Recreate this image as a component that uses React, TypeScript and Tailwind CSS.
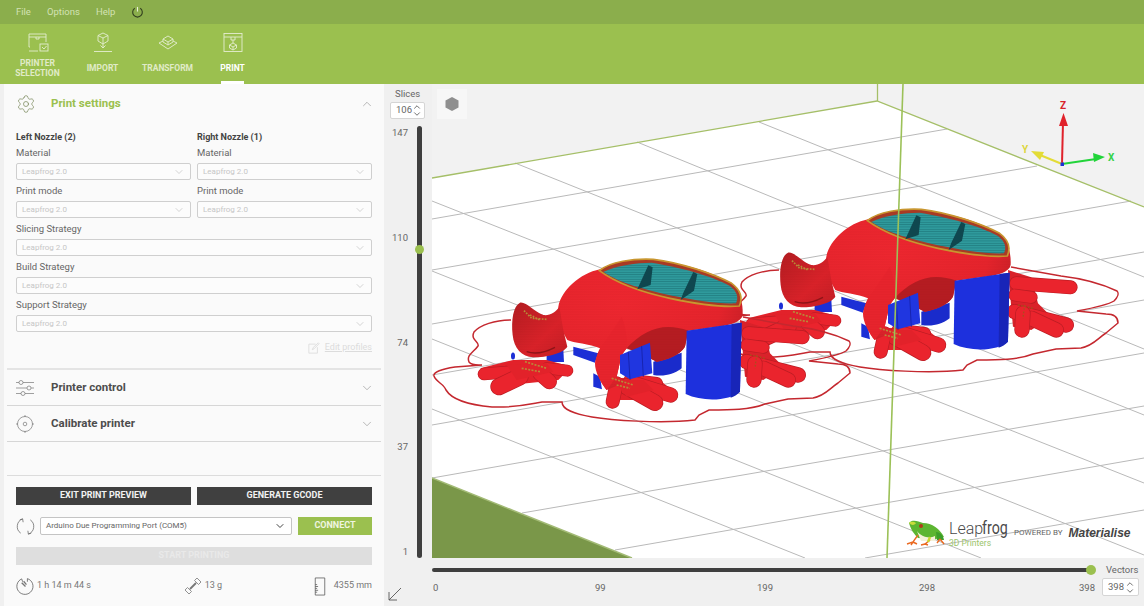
import React from 'react';
import { Settings, ChevronUp, ChevronDown } from 'lucide-react';

const GRID: number[][] = [
  [759, 122, 1144, 277],
  [637, 142, 1144, 349],
  [515, 163, 1144, 415],
  [432, 201, 1144, 483],
  [432, 271, 1144, 555],
  [432, 339, 981, 558],
  [432, 409, 805, 558],
  [432, 219, 947, 129],
  [432, 270, 1037, 166],
  [432, 324, 1131, 201],
  [432, 375, 1144, 252],
  [432, 425, 1144, 300],
  [432, 478, 1144, 353],
  [522, 513, 1144, 406],
  [615, 550, 1144, 458],
  [865, 558, 1144, 510],
];

const RAFT =
  'M511,320 C495,320 480,325 474,332 C470,340 480,342 478,346 C474,352 466,355 469,362 C472,366 480,365 482,365 L455,367 C442,369 433,372 434,376 C436,382 444,384 446,390 C452,400 470,405 492,407 C515,408 530,404 542,402 L562,402 C562,410 575,414 592,417 C610,420 660,424 695,420 L699,415 L709,410 C730,410 750,410 765,404 L788,399 L813,398 C825,396 830,388 838,383 L850,373 C850,366 845,364 838,364 L809,361 C825,358 840,355 846,351 C850,347 851,343 849,341 C830,332 810,328 793,326 L743,317';

const BODY =
  'M385,200 C395,150 450,100 510,88 C560,60 620,55 670,60 C750,68 850,95 900,130 C930,150 940,190 938,225 C935,245 900,258 850,262 L775,272 L765,320 C750,345 710,360 680,365 C650,350 620,335 590,325 L575,345 L560,410 L590,425 L530,450 C505,420 485,370 510,325 C480,310 430,310 412,300 C395,270 380,240 385,200 Z';

const HEAD =
  'M270,188 C290,185 310,215 340,225 C360,228 378,215 388,200 L400,270 L412,320 C400,340 350,352 310,352 C275,350 252,325 248,285 C243,240 250,198 270,188 Z';

// toes are just thick round lines: x1, y1, x2, y2, width
const TOES: number[][] = [
  [955, 280, 1118, 292, 42],
  [950, 315, 1000, 322, 38],
  [950, 365, 1105, 405, 46],
  [1000, 385, 1075, 420, 46],
  [975, 370, 972, 420, 46],
  [250, 395, 162, 402, 38],
  [270, 410, 207, 440, 52],
  [350, 385, 412, 392, 36],
  [330, 400, 358, 425, 46],
  [600, 420, 680, 430, 38],
  [610, 430, 722, 465, 46],
  [590, 440, 675, 488, 50],
  [560, 430, 548, 485, 42],
];

const Frog = () => (
  <g transform="translate(430 240) scale(0.3333)">
    {/* supports behind the body */}
    <path d="M350,342 L400,328 L402,366 L350,366 Z" fill="#1c2fd6" />
    <path d="M430,320 L505,340 L495,368 L430,345 Z" fill="#1c2fd6" />
    <path d="M670,365 L755,338 L755,385 C730,405 700,410 670,405 Z" fill="#1a2bcb" />
    <path d="M490,400 L510,410 L516,448 L490,440 Z" fill="#1c2fd6" />

    {/* rear and front feet */}
    <path d="M930,240 L1000,262 L1020,340 L1060,380 L1000,420 L945,410 Z" fill="#d9222a" />
    <path d="M150,385 L250,360 L350,360 L425,380 L385,420 L240,435 Z" fill="#e2222a" />
    <path d="M530,415 L680,412 L725,450 L690,480 L600,480 L560,480 Z" fill="#e2222a" />
    {TOES.map((t, i) => (
      <g key={i}>
        <line x1={t[0]} y1={t[1]} x2={t[2]} y2={t[3]} stroke="#bb1d24" strokeWidth={t[4]} strokeLinecap="round" />
        <line x1={t[0]} y1={t[1]} x2={t[2]} y2={t[3]} stroke="#ea242d" strokeWidth={t[4] - 4} strokeLinecap="round" />
      </g>
    ))}
    <path d="M230,375 L350,370 L370,395 L260,420 Z" fill="#e2222a" />
    <path d="M550,420 L640,420 L670,450 L590,470 Z" fill="#e2222a" />

    {/* body */}
    <path d={BODY} fill="url(#redBody)" />
    <path d="M495,370 C500,330 540,290 575,230 C590,270 590,300 590,325 L575,345 L560,410 L530,450 C510,425 495,395 495,370 Z" fill="#e8242d" />
    <path d="M590,325 C640,270 700,245 775,272 L765,320 C750,345 710,360 680,365 C650,350 620,335 590,325 Z" fill="#b51c22" />
    <path d={BODY} fill="url(#layers)" />

    {/* block in front of the belly */}
    <path d="M570,345 L660,308 L667,400 L600,418 L570,400 Z" fill="#2036e0" />
    <path d="M595,335 L600,418 M635,318 L640,410" stroke="#1724b0" strokeWidth="3" fill="none" />

    {/* head */}
    <path d={HEAD} fill="url(#redHead)" />
    <path d={HEAD} fill="url(#layers)" />
    <path d="M290,335 C320,345 350,335 375,322" stroke="#8e1418" strokeWidth="4" fill="none" />
    <path d="M282,212 L305,235 L350,238 M300,225 L330,240" stroke="#b98a38" strokeWidth="5" strokeDasharray="5 4" fill="none" />
    <path d="M285,365 L350,385 M275,385 L330,395 M545,415 L610,435 M560,435 L600,445" stroke="#b98a38" strokeWidth="5" strokeDasharray="6 4" fill="none" />
    <path d="M960,345 L1005,355 M980,345 L975,385" stroke="#a8501f" strokeWidth="4" strokeDasharray="5 5" fill="none" />

    {/* big support in front */}
    <path d="M770,272 L935,248 L930,455 C900,482 820,487 767,462 Z" fill="#1d30dd" />
    <path d="M905,252 L935,248 L930,455 C922,464 912,470 902,473 Z" fill="#1825b8" />

    {/* sliced top */}
    <path d="M508,92 C540,65 610,55 670,58 C750,68 850,100 905,130 C932,150 938,175 928,198 C880,202 800,192 720,175 C640,158 560,130 508,92 Z" fill="#a83a25" stroke="#c8962f" strokeWidth="5" />
    <path d="M520,96 C560,76 620,68 665,68 C740,80 840,105 900,138 C922,155 926,172 918,190 C860,192 790,180 720,166 C650,150 570,130 520,96 Z" fill="url(#infill)" />
    <path d="M655,76 L668,82 L662,135 L622,148 Z" fill="#0f474f" />
    <path d="M790,96 L802,102 L792,152 L752,180 L760,158 Z" fill="#0f474f" />
  </g>
);

const Viewport = () => (
  <svg viewBox="432 84 712 474" className="block w-full h-full">
    <defs>
      <radialGradient id="redBody" cx="0.35" cy="0.35" r="0.75">
        <stop offset="0" stopColor="#ee2730" />
        <stop offset="0.7" stopColor="#e6242c" />
        <stop offset="1" stopColor="#c01e25" />
      </radialGradient>
      <linearGradient id="redHead" x1="0" y1="0" x2="1" y2="1">
        <stop offset="0" stopColor="#b21c21" />
        <stop offset="0.6" stopColor="#d92229" />
        <stop offset="1" stopColor="#c21e25" />
      </linearGradient>
      <pattern id="infill" width="20" height="7" patternUnits="userSpaceOnUse">
        <rect width="20" height="7" fill="#2f9a9c" />
        <rect y="5" width="20" height="2" fill="#1f7a7f" />
      </pattern>
      <pattern id="layers" width="6" height="5" patternUnits="userSpaceOnUse">
        <rect y="3" width="6" height="2" fill="#7a0f14" fillOpacity="0.07" />
      </pattern>
    </defs>

    <rect x="432" y="84" width="712" height="474" fill="#f2f2f2" />
    <polygon points="432,178 877,101 1144,207 1144,558 432,558" fill="#ffffff" />
    {GRID.map((l, i) => (
      <line key={i} x1={l[0]} y1={l[1]} x2={l[2]} y2={l[3]} stroke="#b9b9b9" strokeWidth="1" />
    ))}
    <polygon points="432,478 632,558 432,558" fill="#7a9749" />
    <line x1="432" y1="478" x2="632" y2="558" stroke="#a3bb76" strokeWidth="1.5" />
    <polyline points="432,178 877,101 1144,207" fill="none" stroke="#a5bf68" strokeWidth="1.3" />
    <line x1="877.5" y1="84" x2="877.5" y2="101" stroke="#a5bf68" strokeWidth="1.3" />

    <g transform="translate(268 -50)">
      <path d={RAFT} fill="none" stroke="#c4282f" strokeWidth="1.5" />
      <Frog />
    </g>
    <path d={RAFT} fill="none" stroke="#c4282f" strokeWidth="1.5" />
    <Frog />
    <ellipse cx="513" cy="356" rx="2" ry="3.5" fill="#1c2fd6" />
    <ellipse cx="781" cy="306" rx="2" ry="3.5" fill="#1c2fd6" />

    <line x1="903" y1="84" x2="887" y2="558" stroke="#9cc158" strokeWidth="1.6" />

    {/* axes */}
    <line x1="1062" y1="164" x2="1063" y2="122" stroke="#e0222b" strokeWidth="2" />
    <polygon points="1063.5,113 1059,126 1068,126" fill="#e0222b" />
    <line x1="1062" y1="164" x2="1096" y2="159" stroke="#22d43a" strokeWidth="2" />
    <polygon points="1105,157 1093,153 1094,162" fill="#22d43a" />
    <line x1="1062" y1="164" x2="1040" y2="155" stroke="#e3dc36" strokeWidth="2" />
    <polygon points="1031,151 1044,152 1040,160" fill="#e3dc36" />
    <rect x="1060.5" y="162.5" width="3.5" height="3.5" fill="#1c2fd6" />
  </svg>
);

const LogoFrog = () => (
  <svg viewBox="0 0 40 26" className="w-10 h-[26px] shrink-0">
    <path d="M3,3 C6,-1 12,1 17,3 C26,3 34,9 38,17 L30,19 L12,18 C8,14 5,10 3,3 Z" fill="#5cb531" />
    <path d="M11,11 C15,17 24,19 29,16 L29,21 L15,21 Z" fill="#f4f1d8" />
    <path d="M3,3 C5,1 8,2 10,3 C9,5 6,6 3,3 Z" fill="#c8dc3c" />
    <circle cx="15" cy="6" r="2" fill="#b03a1a" />
    <path d="M30,12 C34,12 37,15 38,20 L31,20 Z" fill="#3d9e2a" />
    <path d="M12,15 L7,22 L1,24 M7,22 L5,25 M7,22 L11,24 M24,20 L19,24 L15,25 M19,24 L22,25 M34,19 L38,24 M34,19 L31,23" stroke="#ea6a22" strokeWidth="1.4" fill="none" />
    <path d="M24,17 L22,22" stroke="#c8d62e" strokeWidth="2.4" />
  </svg>
);

const NavIcon = ({ kind }: { kind: string }) => (
  <svg viewBox="0 0 22 22" className="w-[22px] h-[22px]" fill="none" stroke="#e4edd0" strokeWidth="0.9">
    {kind === 'printer' && (
      <>
        <path d="M3,15 L2,15 L2,2 L19,2 L19,10 M2,5 L19,5 M9,5 L9,7 L12,7 L12,5 M2,19 L11,19" />
        <rect x="13" y="12" width="8" height="7" />
        <path d="M15,15 L17,17 L19.5,14" />
      </>
    )}
    {kind === 'import' && (
      <>
        <path d="M11,1 L16,3.5 L16,9 L11,12 L6,9 L6,3.5 Z M6,3.5 L11,6 L16,3.5 M11,6 L11,16 M8.5,13.5 L11,16 L13.5,13.5 M2,19.5 L20,19.5" />
      </>
    )}
    {kind === 'transform' && (
      <>
        <path d="M11,4 L16,7 L11,10 L6,7 Z M6,7 L6,10 L11,13 L16,10 L16,7 M11,10 L11,13 M6,9 L2,11 L11,17 L20,11 L16,9" />
      </>
    )}
    {kind === 'print' && (
      <>
        <rect x="2" y="1.5" width="18" height="18" />
        <path d="M2,5 L20,5 M9,5 L9,8 L13,8 L13,5 M11,8 L11,11" />
        <path d="M11,11 L14.5,13 L14.5,16 L11,18 L7.5,16 L7.5,13 Z M7.5,13 L11,15 L14.5,13 M11,15 L11,18" />
      </>
    )}
  </svg>
);

const NavItem = ({ kind, label, active }: { kind: string; label: string[]; active?: boolean }) => (
  <div className="relative flex flex-col items-center h-[60px] w-[65px] pt-2">
    <NavIcon kind={kind} />
    <div className={`flex-1 flex flex-col justify-center pb-[2px] text-center text-[8.5px] font-bold leading-[10px] ${active ? 'text-white' : 'text-[#e0ebc8]'}`}>
      {label.map((l) => (
        <div key={l}>{l}</div>
      ))}
    </div>
    {active && <div className="absolute bottom-0 w-[23px] h-[3px] bg-white" />}
  </div>
);

const Field = ({ label }: { label: string }) => (
  <div>
    <div className="flex items-center h-[21px] pt-[2px] text-[9.5px] text-[#666]">{label}</div>
    <div className="flex items-center justify-between h-[17px] px-[5px] border border-[#cfcfcf] rounded-[2px] bg-[#fcfcfc] text-[8px] text-[#c6c6c6]">
      <span>Leapfrog 2.0</span>
      <ChevronDown size={12} strokeWidth={1} className="text-[#aaa]" />
    </div>
  </div>
);

const AccordionRow = ({ icon, label }: { icon: React.ReactNode; label: string }) => (
  <div className="flex items-center h-9 mx-[3px] pl-[9px] pr-[7px] border-b border-[#d6d6d6]">
    <div className="w-[35px]">{icon}</div>
    <span className="flex-1 text-[11.5px] font-bold text-[#4d4d4d]">{label}</span>
    <ChevronDown size={14} strokeWidth={1} className="text-[#888]" />
  </div>
);

const Spinner = ({ value, className }: { value: string; className: string }) => (
  <div className={`flex items-center justify-between pl-[5px] pr-[3px] bg-white border border-[#d5d5d5] rounded-[2px] text-[9.5px] text-[#666] ${className}`}>
    <span>{value}</span>
    <div className="flex flex-col -space-y-[3px]">
      <ChevronUp size={10} strokeWidth={2} className="text-[#555]" />
      <ChevronDown size={10} strokeWidth={2} className="text-[#555]" />
    </div>
  </div>
);

export default function App() {
  return (
    <div className="w-[1144px] h-[606px] overflow-hidden flex flex-col bg-[#f0f0f0] font-['Roboto',sans-serif]">
      {/* Menu bar */}
      <div className="h-6 flex items-center bg-[#8bae4c] pl-4 text-[9.5px] text-[#d3e2b4]">
        <span className="w-[31px]">File</span>
        <span className="w-[49px]">Options</span>
        <span className="w-[35px]">Help</span>
        <svg viewBox="0 0 14 14" className="w-[13px] h-[13px]" fill="none" stroke="#33401f" strokeWidth="1.2">
          <path d="M4,2.5 A5.2,5.2 0 1 0 10,2.5" />
          <path d="M7,1 L7,6" stroke="#e7efd6" />
        </svg>
      </div>

      {/* Toolbar */}
      <div className="h-[60px] flex items-start bg-[#9bc04f] pl-[5px]">
        <NavItem kind="printer" label={['PRINTER', 'SELECTION']} />
        <NavItem kind="import" label={['IMPORT']} />
        <NavItem kind="transform" label={['TRANSFORM']} />
        <NavItem kind="print" label={['PRINT']} active />
      </div>

      <div className="flex-1 flex min-h-0">
        {/* Left panel */}
        <div className="ml-1 w-[380px] flex flex-col bg-[#fafafa]">
          <div className="flex items-center h-[39px] pl-3 pr-[10px]">
            <div className="w-[35px]">
              <Settings size={20} strokeWidth={0.9} className="text-[#7c8a5e]" />
            </div>
            <span className="flex-1 text-[11.5px] font-bold text-[#9bc04f]">Print settings</span>
            <ChevronUp size={14} strokeWidth={1} className="text-[#888]" />
          </div>

          <div className="px-3 pt-2">
            <div className="grid grid-cols-2 gap-x-[6px] text-[9px] font-bold leading-3 text-[#444] -mb-[1px]">
              <span>Left Nozzle (2)</span>
              <span>Right Nozzle (1)</span>
            </div>
            <div className="grid grid-cols-2 gap-x-[6px]">
              <Field label="Material" />
              <Field label="Material" />
              <Field label="Print mode" />
              <Field label="Print mode" />
            </div>
            <Field label="Slicing Strategy" />
            <Field label="Build Strategy" />
            <Field label="Support Strategy" />
            <div className="flex items-center justify-end gap-[5px] h-9 pb-1 text-[9px] underline text-[#dcdcdc]">
              <svg viewBox="0 0 14 14" className="w-3 h-3" fill="none" stroke="#dcdcdc" strokeWidth="1">
                <path d="M9,2.5 L1,2.5 L1,13 L11,13 L11,6 M5,9 L6,6.5 L12,1 L13,2 L7,8 Z" />
              </svg>
              Edit profiles
            </div>
          </div>

          <div className="mx-[3px] border-t-2 border-[#e4e4e4]" />
          <AccordionRow
            label="Printer control"
            icon={
              <svg viewBox="0 0 18 16" className="w-[18px] h-4" fill="none" stroke="#777" strokeWidth="0.7">
                <path d="M0,2.5 L3,2.5 M7,2.5 L18,2.5 M0,8 L11,8 M15,8 L18,8 M0,13.5 L5,13.5 M9,13.5 L18,13.5" />
                <circle cx="5" cy="2.5" r="2" />
                <circle cx="13" cy="8" r="2" />
                <circle cx="7" cy="13.5" r="2" />
              </svg>
            }
          />
          <AccordionRow
            label="Calibrate printer"
            icon={
              <svg viewBox="0 0 18 18" className="w-[18px] h-[18px]" fill="none" stroke="#777" strokeWidth="0.7">
                <circle cx="9" cy="9" r="7.5" />
                <circle cx="9" cy="9" r="1.8" />
                <path d="M9,0 L9,2 M9,16 L9,18 M0,9 L2,9 M16,9 L18,9" />
              </svg>
            }
          />

          <div className="mt-auto mx-[3px] border-t border-[#dcdcdc]" />
          <div className="px-3 pt-[11px] h-[130px] flex flex-col">
            <div className="grid grid-cols-2 gap-x-[6px]">
              <button className="h-[18px] bg-[#404040] text-[9px] font-bold text-[#f2f2f2]">EXIT PRINT PREVIEW</button>
              <button className="h-[18px] bg-[#404040] text-[9px] font-bold text-[#f2f2f2]">GENERATE GCODE</button>
            </div>
            <div className="flex items-center mt-3 h-[18px]">
              <svg viewBox="0 0 20 20" className="w-[19px] h-[19px] shrink-0" fill="none" stroke="#666" strokeWidth="0.8">
                <path d="M7,2 A8.5,8.5 0 0 0 5,17 M13,18 A8.5,8.5 0 0 0 15,3 M4,3 L7,2 L7.5,5.5 M16,17 L13,18 L12.5,14.5" />
              </svg>
              <div className="ml-[5px] w-[252px] h-[18px] flex items-center justify-between px-[5px] border border-[#c4c4c4] rounded-[2px] bg-white text-[8px] text-[#666]">
                <span>Arduino Due Programming Port (COM5)</span>
                <ChevronDown size={12} strokeWidth={2} className="text-[#444]" />
              </div>
              <button className="ml-[6px] flex-1 h-[18px] bg-[#9bc04f] text-[9px] font-bold text-[#eff5e0]">CONNECT</button>
            </div>
            <div className="mt-3 h-[18px] flex items-center justify-center bg-[#dedede] text-[9px] font-bold text-[#e9e9e9]">START PRINTING</div>
            <div className="flex items-center justify-between mt-[11px] text-[9px] text-[#777]">
              <div className="flex items-center gap-[2px]">
                <svg viewBox="0 0 20 20" className="w-[19px] h-[19px]" fill="none" stroke="#555" strokeWidth="0.8">
                  <path d="M6,2 A8.5,8.5 0 1 0 12,1.7 L12,5 M6,2 L7,5" />
                  <path d="M6,6 L10,10 M8,4.5 L11,8" strokeWidth="1.4" stroke="#777" />
                </svg>
                <span>1 h 14 m 44 s</span>
              </div>
              <div className="flex items-center gap-[2px]">
                <svg viewBox="0 0 20 20" className="w-5 h-5" fill="none" stroke="#777" strokeWidth="0.8">
                  <path d="M7,13 L13,7" strokeWidth="1.8" />
                  <path d="M2,14 L6,18 L8.5,15.5 L4.5,11.5 Z M11.5,4.5 L15.5,8.5 L18,6 L14,2 Z" />
                </svg>
                <span>13 g</span>
              </div>
              <div className="flex items-center gap-2">
                <svg viewBox="0 0 12 20" className="w-3 h-[19px]" fill="none" stroke="#555" strokeWidth="0.8">
                  <path d="M11,1 L1,1 L1,19 L11,19 Z M1,10 L4,10 M1,12 L3,12 M1,14 L4,14 M1,16 L3,16 M1,8 L3,8" />
                </svg>
                <span>4355 mm</span>
              </div>
            </div>
          </div>
        </div>

        {/* Slices column + viewport + vectors */}
        <div className="flex-1 flex flex-col min-w-0">
          <div className="flex-1 flex min-h-0">
            <div className="relative w-[48px] bg-[#f0f0f0]">
              <div className="pt-1 pl-[11px] text-[9.5px] text-[#666] leading-3">Slices</div>
              <Spinner value="106" className="ml-[6px] mt-[2px] w-[35px] h-[17px]" />
              <div className="absolute left-[33px] top-[42px] bottom-0 w-[5px] rounded-full bg-[#3f3f3f]" />
              <div className="absolute left-[31px] top-[161px] w-[9px] h-[9px] rounded-full bg-[#9bc04f]" />
              <span className="absolute right-[24px] top-[42px] text-[9.5px] text-[#666]">147</span>
              <span className="absolute right-[24px] top-[147px] text-[9.5px] text-[#666]">110</span>
              <span className="absolute right-[24px] top-[252px] text-[9.5px] text-[#666]">74</span>
              <span className="absolute right-[24px] top-[356px] text-[9.5px] text-[#666]">37</span>
              <span className="absolute right-[24px] top-[461px] text-[9.5px] text-[#666]">1</span>
            </div>
            <div className="relative flex-1 min-w-0">
              <Viewport />
              <div className="absolute left-[5px] top-[5px] w-[30px] h-[30px] bg-[#f7f7f7] flex items-center justify-center">
                <svg viewBox="0 0 16 16" className="w-4 h-4">
                  <polygon points="8,1 14.5,4.5 14.5,11.5 8,15 1.5,11.5 1.5,4.5" fill="#8f8f8f" />
                </svg>
              </div>
              <span className="absolute left-[628px] top-[14px] text-[10px] font-bold text-[#d9232b]">Z</span>
              <span className="absolute left-[676px] top-[66px] text-[10px] font-bold text-[#34d24a]">X</span>
              <span className="absolute left-[590px] top-[58px] text-[10px] font-bold text-[#dcd63a]">Y</span>
              <div className="absolute left-[474px] top-[434px] flex items-center">
                <LogoFrog />
                <div className="relative ml-[3px] w-[59px] h-[30px] text-[#4a4a4a]">
                  <div className="flex items-baseline h-5 leading-5 whitespace-nowrap">
                    <span className="text-[16px] font-light w-[33px]">Leap</span>
                    <span className="inline-block text-[19px] w-[26px] scale-x-75 origin-left">frog</span>
                  </div>
                  <div className="absolute left-0 top-[21px] text-[8.5px] leading-[9px] text-[#9bc46b] whitespace-nowrap">3D Printers</div>
                </div>
                <span className="ml-[6px] text-[8px] text-[#666] whitespace-nowrap">POWERED BY</span>
                <span className="ml-[6px] text-[12px] font-bold italic text-[#444] font-['Liberation_Sans',sans-serif] whitespace-nowrap">Materialise</span>
              </div>
            </div>
          </div>

          <div className="relative h-[48px] bg-[#f0f0f0]">
            <svg viewBox="0 0 14 14" className="absolute left-1 top-[29px] w-[14px] h-[14px]" fill="none" stroke="#555" strokeWidth="0.9">
              <path d="M13,1 L1,13 M1,5 L1,13 L9,13" />
            </svg>
            <div className="absolute left-[48px] top-[10px] w-[658px] h-[4px] bg-[#3f3f3f] rounded-full" />
            <div className="absolute left-[702px] top-[7px] w-[10px] h-[10px] rounded-full bg-[#9bc04f]" />
            <span className="absolute left-[49px] top-[23px] text-[9.5px] text-[#666]">0</span>
            <span className="absolute left-[211px] top-[23px] text-[9.5px] text-[#666]">99</span>
            <span className="absolute left-[373px] top-[23px] text-[9.5px] text-[#666]">199</span>
            <span className="absolute left-[535px] top-[23px] text-[9.5px] text-[#666]">298</span>
            <span className="absolute left-[695px] top-[23px] text-[9.5px] text-[#666]">398</span>
            <span className="absolute left-[722px] top-[5px] text-[9.5px] text-[#666]">Vectors</span>
            <Spinner value="398" className="absolute left-[718px] top-[20px] w-[37px] h-[18px]" />
          </div>
        </div>
      </div>
    </div>
  );
}
